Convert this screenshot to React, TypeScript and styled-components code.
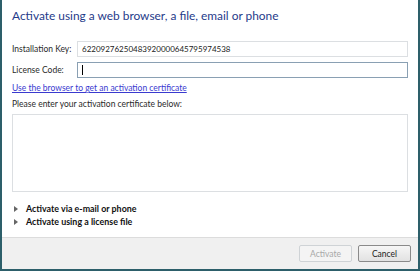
import React from 'react'
import styled, {createGlobalStyle} from "styled-components";

const GlobalStyle = createGlobalStyle`
  html, body {
    margin: 0;
    padding: 0;
    background: #fff;
  }
  body {
    font-family: Lato, "Open Sans", sans-serif;
  }
`

type FieldProps = {
    label: string;
    value?: string;
    active?: boolean;
};

const Field = (props: FieldProps) => (
    <Row>
        <Label>{props.label}</Label>
        <Input $active={props.active}>
            {props.value}
            {props.active && <Caret/>}
        </Input>
    </Row>
);

const Expander = ({text}: { text: string }) => (
    <ExpanderRow>
        <Arrow/>
        <span>{text}</span>
    </ExpanderRow>
);

export default function App() {
    return (
        <>
            <GlobalStyle/>
            <Window>
                <Main>
                    <Title>Activate using a web browser, a file, email or phone</Title>
                    <Fields>
                        <Field label="Installation Key:" value="62209276250483920000645795974538"/>
                        <Field label="License Code:" active/>
                    </Fields>
                    <Link href="#">Use the browser to get an activation certificate</Link>
                    <Hint>Please enter your activation certificate below:</Hint>
                    <CertBox/>
                    <Expanders>
                        <Expander text="Activate via e-mail or phone"/>
                        <Expander text="Activate using a license file"/>
                    </Expanders>
                </Main>
                <Footer>
                    <Button disabled>Activate</Button>
                    <Button>Cancel</Button>
                </Footer>
            </Window>
        </>
    );
}

const Window = styled.div`
  width: 420px;
  height: 271px;
  box-sizing: border-box;
  border: 2px solid #2d5f6a;
  border-top: none;
  display: flex;
  flex-direction: column;
  background: #fff;
`
const Main = styled.div`
  flex: 1;
  padding: 6px 10px 0 10px;
  display: flex;
  flex-direction: column;
`
const Title = styled.div`
  font-size: 11.9px;
  color: #1f3b8a;
  line-height: 20px;
  margin-bottom: 15px;
  white-space: nowrap;
`
const Fields = styled.div`
  display: flex;
  flex-direction: column;
  gap: 5px;
`
const Row = styled.div`
  display: flex;
  align-items: center;
`
const Label = styled.div`
  width: 65px;
  font-size: 8.5px;
  color: #2a2a2a;
  white-space: nowrap;
`
const Input = styled.div<{ $active?: boolean }>`
  flex: 1;
  height: 16px;
  box-sizing: border-box;
  border: 1px solid ${p => p.$active ? '#8aa0b3' : '#dcdfe2'};
  padding: 0 4px;
  font-size: 8px;
  color: #222;
  display: flex;
  align-items: center;
`
const Caret = styled.span`
  width: 1px;
  height: 10px;
  background: #000;
`
const Link = styled.a`
  margin-top: 3px;
  font-size: 8.5px;
  line-height: 14px;
  color: #3a3acf;
  white-space: nowrap;
`
const Hint = styled.div`
  margin-top: 2px;
  font-size: 8.5px;
  line-height: 14px;
  color: #2a2a2a;
`
const CertBox = styled.div`
  margin-top: 3px;
  height: 78px;
  box-sizing: border-box;
  border: 1px solid #dcdfe2;
`
const Expanders = styled.div`
  margin-top: 10px;
  display: flex;
  flex-direction: column;
`
const ExpanderRow = styled.div`
  display: flex;
  align-items: center;
  gap: 8px;
  padding-left: 2px;
  font-size: 8.9px;
  line-height: 13px;
  font-weight: 700;
  color: #111;
`
const Arrow = styled.span`
  width: 0;
  height: 0;
  border-top: 3px solid transparent;
  border-bottom: 3px solid transparent;
  border-left: 4px solid #666;
`
const Footer = styled.div`
  height: 32px;
  box-sizing: border-box;
  border-top: 1px solid #dcdcdc;
  background: #f0f0f0;
  display: flex;
  align-items: center;
  justify-content: flex-end;
  gap: 6px;
  padding: 0 7px 0 0;
`
const Button = styled.button`
  width: 53px;
  height: 17px;
  box-sizing: border-box;
  border: 1px solid ${p => p.disabled ? '#cfd3d6' : '#8a8a8a'};
  border-radius: 2px;
  background: ${p => p.disabled ? '#f4f4f4' : 'linear-gradient(#f6f6f6, #e2e2e2)'};
  font-family: Lato, "Open Sans", sans-serif;
  font-size: 8.5px;
  color: ${p => p.disabled ? '#a8a8a8' : '#222'};
  padding: 0;
`
